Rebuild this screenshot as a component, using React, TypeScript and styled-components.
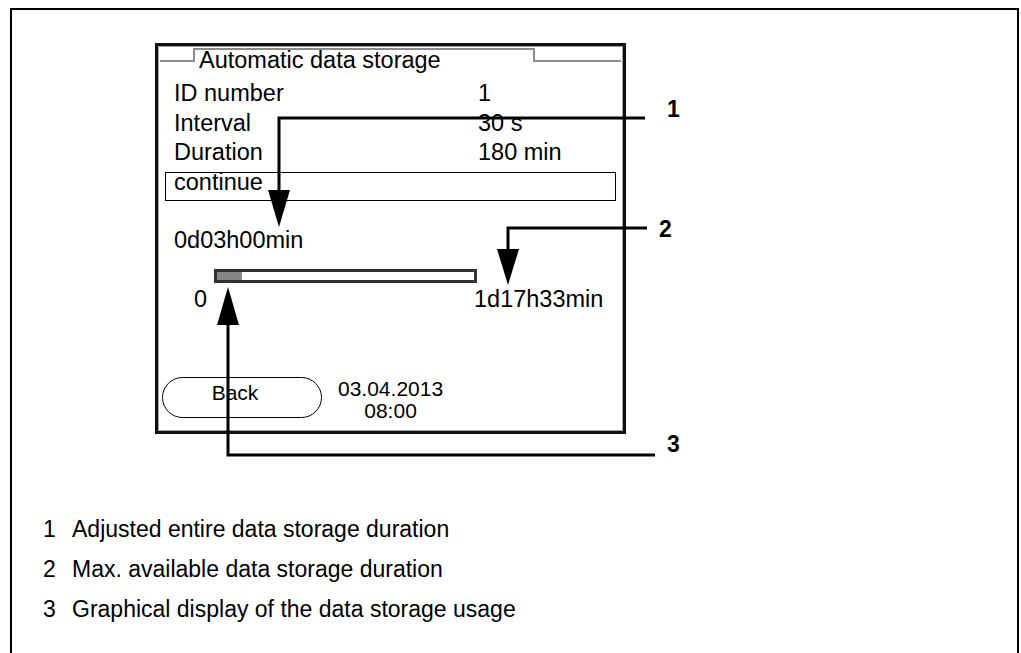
import React from "react";
import styled, { createGlobalStyle } from "styled-components";

const Global = createGlobalStyle`
  html, body { margin: 0; padding: 0; background: #fff; }
  body { font-family: "Liberation Sans", Arial, sans-serif; color: #000; }
`;

const Frame = styled.div`
  position: relative;
  box-sizing: border-box;
  margin: 8px 0 0 10px;
  width: 1009px;
  height: 645px;
  border: 2px solid #000;
  border-bottom: none;
  overflow: hidden;
`;

const Figure = styled.div`
  padding: 33px 0 0 143px;
`;

const Device = styled.div`
  box-sizing: border-box;
  width: 471px;
  height: 391px;
  border: 3px solid #111;
  box-shadow: inset 1px 1px 0 #a0a0a0, inset -1px -1px 0 #a0a0a0;
  display: flex;
  flex-direction: column;
  font-size: 23.5px;
`;

const TitleBar = styled.div`
  display: flex;
  padding: 2px 2px 0 2px;
  height: 16px;
  box-sizing: border-box;
`;

const TabEdge = styled.div<{ $w?: number }>`
  box-sizing: border-box;
  height: 14px;
  border-bottom: 2px solid #8c8c8c;
  ${(p) => (p.$w ? `width: ${p.$w}px;` : "flex: 1;")}
`;

const Tab = styled.div`
  box-sizing: border-box;
  width: 342px;
  height: 14px;
  border: 2px solid #8c8c8c;
  border-bottom: none;
  padding-left: 4px;
`;

const TitleText = styled.div`
  line-height: 20px;
  white-space: nowrap;
`;

const Rows = styled.div`
  margin-top: 17px;
  padding-left: 16px;
  display: grid;
  grid-template-columns: 304px 1fr;
  line-height: 29.5px;
`;

const Cell = styled.div`
  white-space: nowrap;
`;

const ContinueBox = styled.div`
  box-sizing: border-box;
  margin: 4.5px 0 0 7px;
  width: 451px;
  height: 29px;
  border: 1px solid #000;
  padding-left: 8px;
  line-height: 18px;
`;

const Elapsed = styled.div`
  margin-top: 25px;
  padding-left: 16px;
  line-height: 29.5px;
`;

const Bar = styled.div`
  box-sizing: border-box;
  margin: 13.5px 0 0 56px;
  width: 263px;
  height: 14px;
  border: 3px solid #333;
  background: #fff;
`;

const BarFill = styled.div`
  height: 100%;
  background: #858585;
`;

const Scale = styled.div`
  margin-top: 2px;
  padding-left: 36px;
  display: grid;
  grid-template-columns: 280px auto;
  line-height: 29.5px;
`;

const Footer = styled.div`
  margin-top: auto;
  padding: 0 0 9px 4px;
  display: flex;
  align-items: flex-start;
  font-size: 21px;
`;

const Pill = styled.div`
  box-sizing: border-box;
  width: 160px;
  height: 41px;
  border: 1px solid #000;
  border-radius: 21px;
  line-height: 30px;
  padding: 0 14px 9px 0;
  text-align: center;
`;

const DateBlock = styled.div`
  margin-left: 16px;
  padding-top: 1px;
  line-height: 22px;
  text-align: center;
`;

const Legend = styled.div`
  margin-top: 75px;
  padding-left: 31px;
  display: grid;
  grid-template-columns: 29px auto;
  font-size: 23px;
  line-height: 40px;
`;

const Overlay = styled.svg`
  position: absolute;
  left: 0;
  top: 0;
  width: 1007px;
  height: 645px;
  pointer-events: none;
`;

const CalloutLabel = styled.span<{ $x: number; $y: number }>`
  position: absolute;
  left: ${(p) => p.$x}px;
  top: ${(p) => p.$y}px;
  font-weight: bold;
  font-size: 23px;
  line-height: 23px;
`;

type Callout = { path: string; head: string };

const callouts: Callout[] = [
  { path: "M645 118 H279 V192", head: "268,190 290,190 279,227" },
  { path: "M647 228 H508 V251", head: "497,249 519,249 508,285" },
  { path: "M655 455 H228 V323", head: "217,325 239,325 228,287" },
];

const labels = [
  { n: "1", x: 667, base: 117 },
  { n: "2", x: 659, base: 237 },
  { n: "3", x: 667, base: 452 },
];

const legend = [
  "Adjusted entire data storage duration",
  "Max. available data storage duration",
  "Graphical display of the data storage usage",
];

export default function App() {
  return (
    <>
      <Global />
      <Frame>
        <Figure>
          <Device>
            <TitleBar>
              <TabEdge $w={33} />
              <Tab>
                <TitleText>Automatic data storage</TitleText>
              </Tab>
              <TabEdge />
            </TitleBar>
            <Rows>
              <Cell>ID number</Cell>
              <Cell>1</Cell>
              <Cell>Interval</Cell>
              <Cell>30 s</Cell>
              <Cell>Duration</Cell>
              <Cell>180 min</Cell>
            </Rows>
            <ContinueBox>continue</ContinueBox>
            <Elapsed>0d03h00min</Elapsed>
            <Bar>
              <BarFill style={{ width: "25px" }} />
            </Bar>
            <Scale>
              <Cell>0</Cell>
              <Cell>1d17h33min</Cell>
            </Scale>
            <Footer>
              <Pill>Back</Pill>
              <DateBlock>
                03.04.2013
                <br />
                08:00
              </DateBlock>
            </Footer>
          </Device>
        </Figure>
        <Legend>
          {legend.map((t, i) => (
            <React.Fragment key={i}>
              <span>{i + 1}</span>
              <span>{t}</span>
            </React.Fragment>
          ))}
        </Legend>
        <Overlay viewBox="0 0 1007 645">
          <g transform="translate(-12 -10)">
            {callouts.map((c, i) => (
              <g key={i}>
                <path d={c.path} fill="none" stroke="#000" strokeWidth={3} />
                <polygon points={c.head} fill="#000" />
              </g>
            ))}
          </g>
        </Overlay>
        {labels.map((l) => (
          <CalloutLabel key={l.n} $x={l.x - 12} $y={l.base - 19.5 - 10}>
            {l.n}
          </CalloutLabel>
        ))}
      </Frame>
    </>
  );
}
